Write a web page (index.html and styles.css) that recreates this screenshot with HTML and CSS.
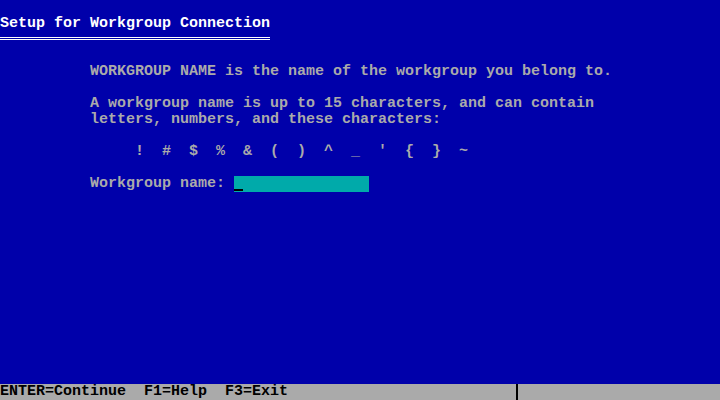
FILE: index.html
```html
<!DOCTYPE html>
<html>

<head>
    <title>Setup for Workgroup Connection</title>
    <link rel="stylesheet" href="styles.css">
</head>

<body>
    <div class="screen">
        <div class="row"></div>
        <div class="row title">Setup for Workgroup Connection</div>
        <div class="row"><div class="double-line"></div></div>
        <div class="row"></div>

        <div class="content">
            <div class="row">WORKGROUP NAME is the name of the workgroup you belong to.</div>
            <div class="row"></div>
            <div class="row">A workgroup name is up to 15 characters, and can contain</div>
            <div class="row">letters, numbers, and these characters:</div>
            <div class="row"></div>
            <div class="row symbols">     !  #  $  %  &amp;  (  )  ^  _  '  {  }  ~</div>
            <div class="row"></div>
            <div class="row field-row">
                <label for="wg-name">Workgroup name: </label>
                <span class="field" id="wg-name"><span class="cursor"></span></span>
            </div>
        </div>

        <div class="spacer"></div>

        <div class="status-bar">
            <span class="keys">ENTER=Continue  F1=Help  F3=Exit</span>
            <span class="divider"></span>
        </div>
    </div>
</body>

</html>
```

FILE: styles.css
```css
body {
    margin: 0;
    background-color: #0000AA;
}

.screen {
    width: 720px;
    height: 400px;
    display: flex;
    flex-direction: column;
    background-color: #0000AA;
    color: #AAAAAA;
    font-family: "Liberation Mono", "DejaVu Sans Mono", monospace;
    font-size: 15px;
    font-weight: bold;
    overflow: hidden;
}

.row {
    height: 16px;
    line-height: 16px;
    white-space: pre;
}

.title {
    color: #FFFFFF;
}

.double-line {
    width: 270px;
    height: 1px;
    margin-top: 5px;
    border-top: 1px solid #FFFFFF;
    border-bottom: 1px solid #FFFFFF;
}

.content {
    padding-left: 90px;
}

.field-row {
    display: flex;
}

.field {
    width: 135px;
    height: 16px;
    background-color: #00AAAA;
}

.cursor {
    display: block;
    width: 9px;
    height: 2px;
    margin-top: 13px;
    background-color: #000000;
}

.spacer {
    flex: 1;
}

.status-bar {
    height: 16px;
    line-height: 16px;
    display: flex;
    background-color: #AAAAAA;
    color: #000000;
    white-space: pre;
}

.keys {
    width: 516px;
}

.divider {
    width: 2px;
    height: 16px;
    background-color: #000000;
}
```
